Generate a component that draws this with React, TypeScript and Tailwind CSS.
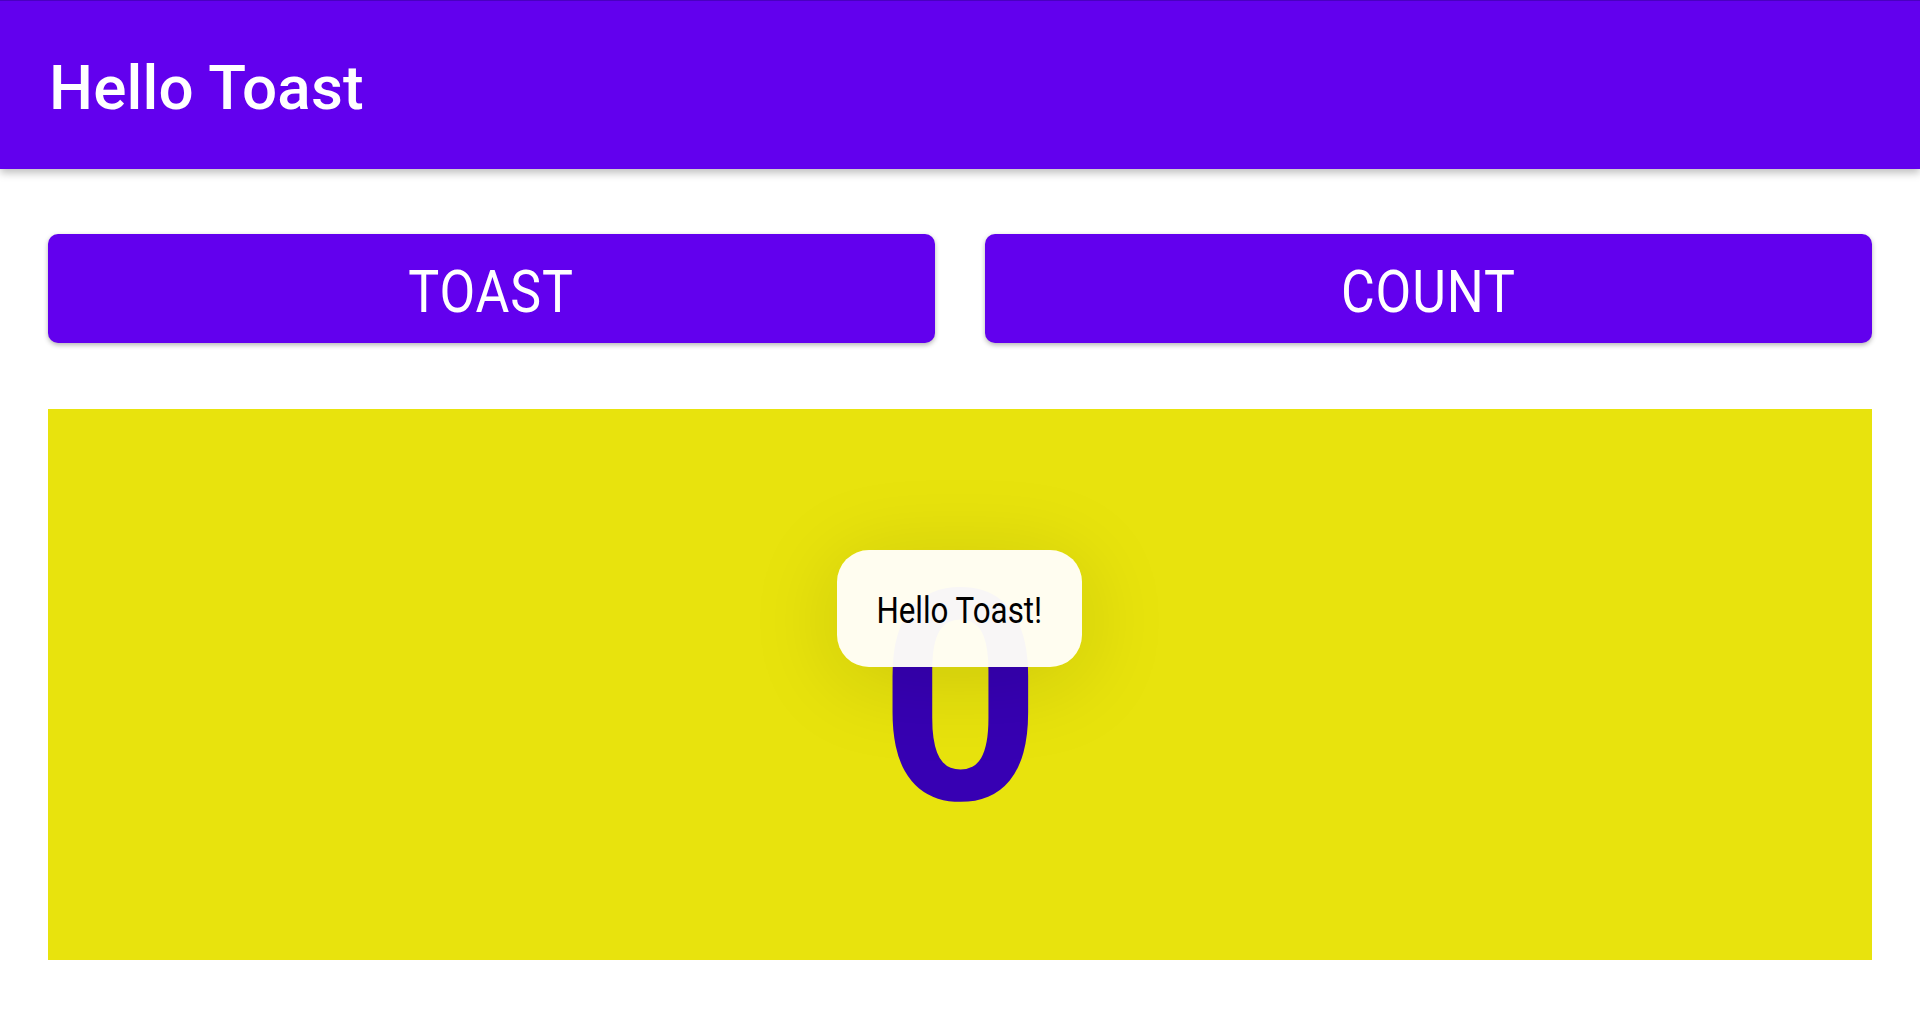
import React from "react";

export default function App() {
  return (
    <div
      className="w-[1920px] h-[1009px] bg-white overflow-hidden relative"
      style={{ fontFamily: "Roboto, 'Noto Sans', sans-serif" }}
    >
      <header className="h-[169px] bg-[#6200EE] border-t border-[#4a00c0] flex items-center pl-[49px] shadow-[0_4px_8px_rgba(0,0,0,0.25)] relative z-10">
        <h1 className="text-white text-[62px] font-medium leading-none tracking-[0.2px] pt-[5px]">
          Hello Toast
        </h1>
      </header>

      <main className="px-[48px] pt-[65px] flex flex-col gap-[66px]">
        <div className="flex gap-[50px]">
          <button className="flex-1 h-[109px] rounded-[10px] bg-[#6200EE] text-white shadow-[0_2px_5px_rgba(0,0,0,0.3)] flex items-center justify-center">
            <span className="inline-block text-[59px] leading-none scale-x-[0.88] tracking-[1px] pt-[5px]">TOAST</span>
          </button>
          <button className="flex-1 h-[109px] rounded-[10px] bg-[#6200EE] text-white shadow-[0_2px_5px_rgba(0,0,0,0.3)] flex items-center justify-center">
            <span className="inline-block text-[59px] leading-none scale-x-[0.88] tracking-[1px] pt-[5px]">COUNT</span>
          </button>
        </div>

        <section className="h-[551px] bg-[#E8E30D] flex items-center justify-center relative">
          <span className="text-[#3700B3] font-bold text-[294px] leading-none pt-[28px] scale-x-[0.96] inline-block">0</span>
          <div className="absolute left-[789px] top-[141px] w-[245px] h-[117px] rounded-[32px] bg-[#FFFEF8]/[0.97] shadow-[0_12px_90px_rgba(0,0,0,0.13)] flex items-center justify-center">
            <span className="inline-block text-black text-[36px] leading-none scale-x-[0.87] pt-[4px]">Hello Toast!</span>
          </div>
        </section>
      </main>
    </div>
  );
}
